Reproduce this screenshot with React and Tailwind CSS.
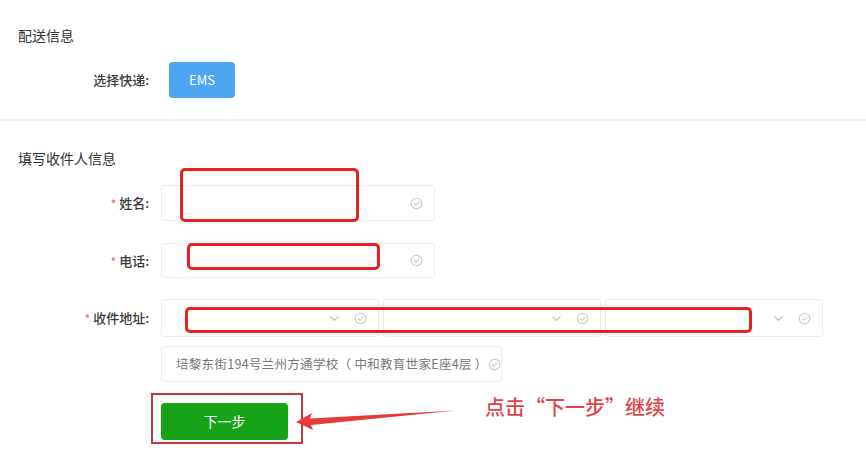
import React from 'react';

const CheckCircle = () => (
    <svg className="w-[13px] h-[13px] shrink-0" viewBox="0 0 16 16" fill="none" stroke="#c8c8c8" strokeWidth="1.3">
        <circle cx="8" cy="8" r="6.5" />
        <path d="M5 8.2l2 2 4-4" strokeLinecap="round" strokeLinejoin="round" />
    </svg>
);

const Chevron = () => (
    <svg className="w-[11px] h-[11px] shrink-0" viewBox="0 0 12 12" fill="none" stroke="#bdbdbd" strokeWidth="1.3">
        <path d="M2 4l4 4 4-4" strokeLinecap="round" strokeLinejoin="round" />
    </svg>
);

const Label = ({ children, required }) => (
    <div className="w-[149px] mr-[12px] text-right text-[13px] text-[#3a3a3a] font-medium">
        {required && <span className="text-[#e46a6a] text-[11px] mr-[3px]">*</span>}
        {children}
    </div>
);

const SelectBox = () => (
    <div className="w-[218px] h-[38px] border border-[#ececec] rounded-[3px] flex items-center justify-end gap-[14px] pr-[11px]">
        <Chevron />
        <CheckCircle />
    </div>
);

const App = () => {
    return (
        <div className="relative w-[866px] h-[453px] overflow-hidden bg-white" style={{ fontFamily: '"Noto Sans CJK SC", "Noto Sans", sans-serif' }}>
            {/* 配送信息 */}
            <div className="pt-[26px]">
                <div className="pl-[18px] text-[14px] leading-[18px] text-[#333]">配送信息</div>
                <div className="mt-[18px] flex items-center">
                    <Label>选择快递:</Label>
                    <button className="ml-[8px] w-[66px] h-[36px] rounded-[4px] bg-[#4ea6f3] text-white text-[13px]">EMS</button>
                </div>
            </div>

            <div className="mt-[21px] border-t-2 border-[#eeeeee]"></div>

            {/* 填写收件人信息 */}
            <div className="pt-[28px]">
                <div className="pl-[18px] text-[14px] leading-[18px] text-[#333]">填写收件人信息</div>

                <div className="mt-[18px] flex items-center">
                    <Label required>姓名:</Label>
                    <div className="w-[274px] h-[36px] border border-[#ececec] rounded-[3px] flex items-center justify-end pr-[11px]">
                        <CheckCircle />
                    </div>
                </div>

                <div className="mt-[22px] flex items-center">
                    <Label required>电话:</Label>
                    <div className="w-[274px] h-[35px] border border-[#ececec] rounded-[3px] flex items-center justify-end pr-[11px]">
                        <CheckCircle />
                    </div>
                </div>

                <div className="mt-[21px] flex items-center">
                    <Label required>收件地址:</Label>
                    <div className="flex gap-[4px]">
                        <SelectBox />
                        <SelectBox />
                        <SelectBox />
                    </div>
                </div>

                <div className="mt-[9px] ml-[161px] w-[341px] h-[36px] border border-[#ececec] rounded-[3px] flex items-center pl-[14px] text-[12.5px] tracking-[0.3px] text-[#777] whitespace-nowrap">
                    <span>培黎东街194号兰州方通学校（ 中和教育世家E座4层 ）</span>
                    <CheckCircle />
                </div>

                <button className="mt-[21px] ml-[161px] w-[127px] h-[37px] rounded-[4px] bg-[#17a317] text-white text-[14px]">下一步</button>
            </div>

            {/* annotations */}
            <div className="absolute left-[180px] top-[168px] w-[179px] h-[54px] border-[3px] border-[#e8201c] rounded-[5px]"></div>
            <div className="absolute left-[187px] top-[243px] w-[193px] h-[27px] border-[3px] border-[#e8201c] rounded-[5px]"></div>
            <div className="absolute left-[185px] top-[307px] w-[567px] h-[26px] border-[3px] border-[#e8201c] rounded-[5px]"></div>
            <div className="absolute left-[151px] top-[393px] w-[152px] h-[51px] border-2 border-[#c23a3c]"></div>

            <svg className="absolute left-[290px] top-[405px]" width="170" height="30" viewBox="0 0 170 30">
                <path d="M6 17 L22 8 L20 13.5 L166 5.5 L21 20 L23 25 Z" fill="#e6393a" />
            </svg>

            <div className="absolute left-[485px] top-[394px] text-[20px] leading-[26px] text-[#e0444a] font-medium">点击“下一步”继续</div>
        </div>
    );
};

export default App;
